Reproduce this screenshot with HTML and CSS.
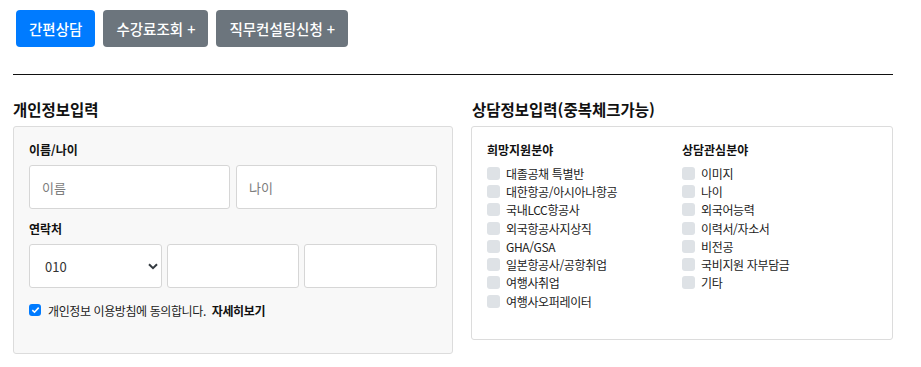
FILE: index.html
```html
<!DOCTYPE html>
<html lang="ko">
<head>
<meta charset="utf-8">
<title>상담신청</title>
<link rel="stylesheet" href="styles.css">
</head>
<body>
<div class="page">
  <div class="tabs">
    <button class="btn btn-primary">간편상담</button>
    <button class="btn btn-secondary">수강료조회 +</button>
    <button class="btn btn-secondary">직무컨설팅신청 +</button>
  </div>
  <hr class="divider">
  <div class="cols">
    <section class="col">
      <h3 class="title">개인정보입력</h3>
      <div class="box box-gray">
        <div class="label">이름/나이</div>
        <div class="row two">
          <input class="field" type="text" placeholder="이름">
          <input class="field" type="text" placeholder="나이">
        </div>
        <div class="label label2">연락처</div>
        <div class="row three">
          <div class="select-wrap">
            <select class="field select"><option>010</option></select>
            <svg class="chev" width="10" height="7" viewBox="0 0 10 7"><path d="M1 1.2 L5 5.2 L9 1.2" fill="none" stroke="#343a40" stroke-width="2"/></svg>
          </div>
          <input class="field" type="text">
          <input class="field" type="text">
        </div>
        <div class="agree">
          <span class="cb checked"><svg width="9" height="8" viewBox="0 0 9 8"><path d="M1.3 4.2 L3.5 6.2 L7.7 1.6" fill="none" stroke="#fff" stroke-width="1.6"/></svg></span>
          <span class="agree-text">개인정보 이용방침에 동의합니다.</span>
          <a class="more">자세히보기</a>
        </div>
      </div>
    </section>
    <section class="col">
      <h3 class="title">상담정보입력(중복체크가능)</h3>
      <div class="box box-white">
        <div class="groups">
          <div class="group">
            <div class="label">희망지원분야</div>
            <ul class="checks">
              <li><span class="cb"></span>대졸공채 특별반</li>
              <li><span class="cb"></span>대한항공/아시아나항공</li>
              <li><span class="cb"></span>국내LCC항공사</li>
              <li><span class="cb"></span>외국항공사지상직</li>
              <li><span class="cb"></span>GHA/GSA</li>
              <li><span class="cb"></span>일본항공사/공항취업</li>
              <li><span class="cb"></span>여행사취업</li>
              <li><span class="cb"></span>여행사오퍼레이터</li>
            </ul>
          </div>
          <div class="group">
            <div class="label">상담관심분야</div>
            <ul class="checks">
              <li><span class="cb"></span>이미지</li>
              <li><span class="cb"></span>나이</li>
              <li><span class="cb"></span>외국어능력</li>
              <li><span class="cb"></span>이력서/자소서</li>
              <li><span class="cb"></span>비전공</li>
              <li><span class="cb"></span>국비지원 자부담금</li>
              <li><span class="cb"></span>기타</li>
            </ul>
          </div>
        </div>
      </div>
    </section>
  </div>
</div>
</body>
</html>
```
FILE: styles.css
```css
* { box-sizing: border-box; }
html, body { margin: 0; padding: 0; background: #fff; }
body {
  font-family: "Noto Sans CJK KR", "Noto Sans", "Liberation Sans", sans-serif;
  color: #212529;
}
.page { width: 880px; margin-left: 13px; }
.tabs { display: flex; gap: 8px; padding: 10px 0 0 3px; }
.btn {
  height: 37px;
  border: none;
  border-radius: 4px;
  padding: 0 13px;
  color: #fff;
  font-family: inherit;
  font-size: 14.5px;
  font-weight: 500;
  line-height: 37px;
}
.btn-primary { background: #007bff; }
.btn-secondary { background: #6c757d; }
.divider {
  margin: 27px 0 0;
  border: none;
  border-top: 1px solid #111;
  height: 0;
}
.cols {
  display: grid;
  grid-template-columns: 440px 422px;
  column-gap: 18px;
  margin-top: 22px;
  align-items: start;
}
.title {
  margin: 0 0 5px;
  font-size: 15.5px;
  font-weight: 700;
  line-height: 24px;
  color: #111;
}
.col:last-child .title { padding-left: 1px; }
.box {
  border: 1px solid #dcdcdc;
  border-radius: 3px;
}
.box-gray { background: #f8f8f8; padding: 14px 15px 34px; }
.box-white { background: #fff; padding: 14px 15px 29px; }
.label {
  font-size: 12px;
  font-weight: 700;
  line-height: 18px;
  color: #111;
  margin-bottom: 6px;
}
.label2 { margin-top: 11px; }
.row { display: grid; gap: 6px; }
.row.two { grid-template-columns: 1fr 1fr; }
.row.three { grid-template-columns: 133px 132px 133px; gap: 5px; }
.field {
  width: 100%;
  height: 44px;
  border: 1px solid #d6d6d6;
  border-radius: 3px;
  background: #fff;
  padding: 0 12px;
  font-family: inherit;
  font-size: 13px;
  color: #333;
  outline: none;
}
.field::placeholder { color: #7d7d7d; }
.select-wrap { position: relative; }
.select {
  appearance: none;
  -webkit-appearance: none;
  padding-left: 15px;
  color: #333;
}
.chev { position: absolute; right: 4px; top: 19px; }
.agree {
  display: flex;
  align-items: center;
  margin-top: 13px;
  height: 18px;
  font-size: 12px;
  letter-spacing: -0.4px;
  color: #222;
}
.cb {
  display: inline-flex;
  align-items: center;
  justify-content: center;
  width: 13px;
  height: 13px;
  border-radius: 3px;
  background: #dee2e6;
  flex: none;
}
.cb.checked { background: #007bff; width: 12px; height: 12px; }
.agree .cb { margin-right: 7px; }
.more { margin-left: 6px; font-weight: 700; color: #111; }
.groups { display: grid; grid-template-columns: 195px 1fr; }
.group .label { margin-bottom: 5px; }
.checks { list-style: none; margin: 0; padding: 0; }
.checks li {
  display: flex;
  align-items: center;
  height: 18.3px;
  font-size: 12px;
  letter-spacing: -0.35px;
  color: #222;
}
.checks .cb { margin-right: 6px; }
```
